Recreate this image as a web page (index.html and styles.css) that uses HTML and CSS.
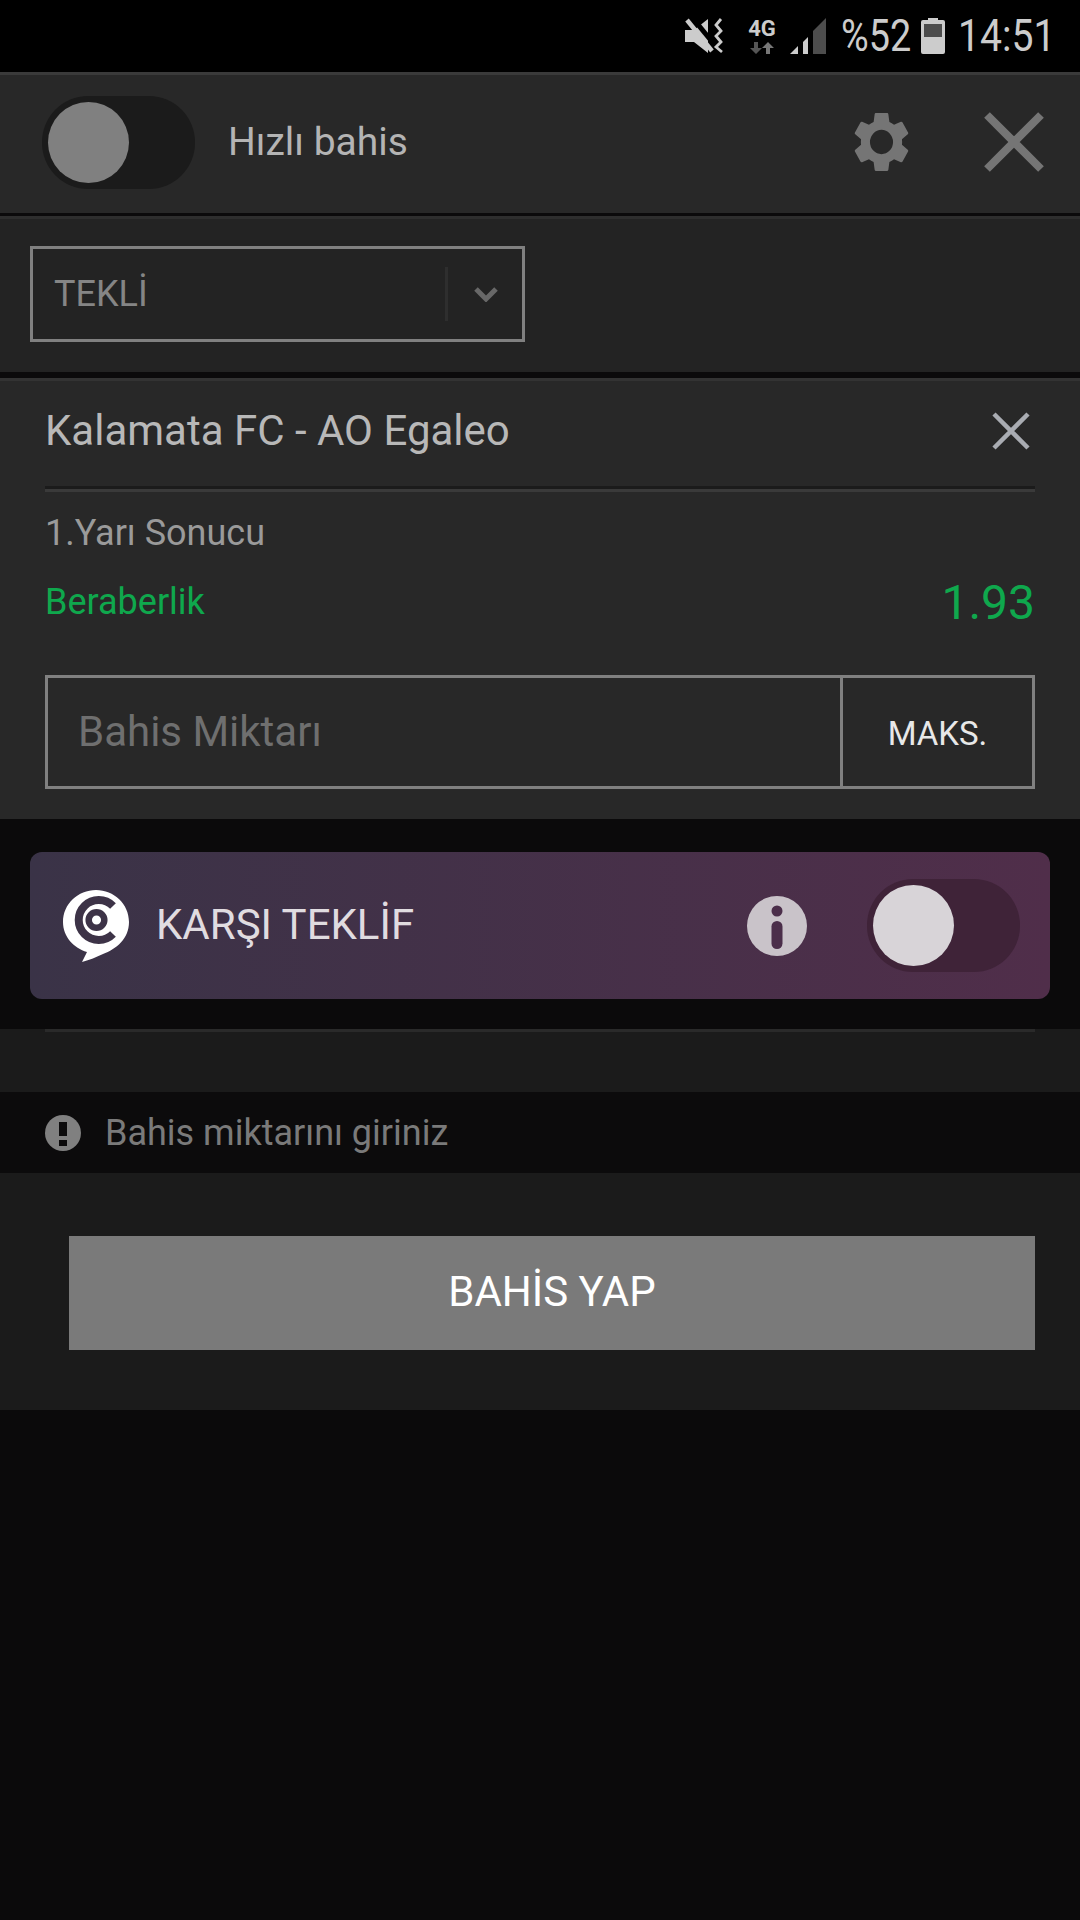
FILE: index.html
```html
<!DOCTYPE html>
<html lang="tr">
<head>
<meta charset="utf-8">
<title>Bahis kuponu</title>
<link rel="stylesheet" href="styles.css">
</head>
<body>
<div class="status">
  <svg class="st-mute" viewBox="0 0 38 36" width="38" height="36">
    <path fill="#ccc" d="M0 12h9L23 1v34L9 24H0z"/>
    <path stroke="#000" stroke-width="5" d="M6 -2L33 31"/>
    <path stroke="#ccc" stroke-width="4.500" d="M2 2L27 33"/>
    <path fill="none" stroke="#ccc" stroke-width="2.800" d="M36 1l-5 6 5 6-5 5 5 6-5 5 6 5"/>
  </svg>
  <div class="st-net">
    <span class="st-4g">4G</span>
    <svg viewBox="0 0 24 12" width="24" height="12">
      <path fill="#555" d="M4 0h4v6h4l-6 6-6-6h4z"/>
      <path fill="#777" d="M16 12h4V6h4l-6-6-6 6h4z"/>
    </svg>
  </div>
  <svg class="st-signal" viewBox="0 0 36 36" width="36" height="36">
    <path fill="#ccc" d="M0 36l8-8v8z"/>
    <path fill="#ccc" d="M13 36V24l5-5v17z"/>
    <path fill="#4d4d4d" d="M23 36V13L36 0v36z"/>
  </svg>
  <span class="st-text st-pct">%52</span>
  <svg class="st-batt" viewBox="0 0 24 36" width="24" height="36">
    <path fill="#ccc" d="M7 0h10v2h5a2 2 0 0 1 2 2v30a2 2 0 0 1-2 2H2a2 2 0 0 1-2-2V4a2 2 0 0 1 2-2h5z"/>
    <path fill="#4d4d4d" d="M3 6h18v13H3z"/>
  </svg>
  <span class="st-text st-time">14:51</span>
</div>

<header class="top">
  <div class="switch"><span class="knob"></span></div>
  <span class="top-label">Hızlı bahis</span>
  <svg class="gear" viewBox="2 2 20 20" width="55" height="58" preserveAspectRatio="none">
    <path fill="#757575" fill-rule="evenodd" d="M19.43 12.980c.04-.32.07-.64.07-.98s-.03-.66-.07-.98l2.110-1.650c.19-.15.24-.42.12-.64l-2-3.460c-.12-.22-.39-.3-.61-.22l-2.490 1c-.52-.4-1.080-.73-1.690-.98l-.38-2.650C14.460 2.180 14.250 2 14 2h-4c-.25 0-.46.18-.49.42l-.38 2.650c-.61.25-1.170.59-1.690.98l-2.490-1c-.23-.09-.49 0-.61.22l-2 3.460c-.13.22-.07.49.12.64l2.110 1.650c-.04.32-.07.65-.07.98s.03.66.07.98l-2.110 1.650c-.19.15-.24.42-.12.64l2 3.460c.12.22.39.3.61.22l2.490-1c.52.4 1.080.73 1.690.98l.38 2.650c.03.24.24.42.49.42h4c.25 0 .46-.18.49-.42l.38-2.650c.61-.25 1.170-.59 1.690-.98l2.490 1c.23.09.49 0 .61-.22l2-3.460c.12-.22.07-.49-.12-.64l-2.110-1.650zM12 16.200a4.200 4.200 0 1 1 0-8.400 4.200 4.200 0 0 1 0 8.400z"/>
  </svg>
  <svg class="top-x" viewBox="0 0 60 60" width="60" height="60">
    <path stroke="#757575" stroke-width="8" d="M3 3l54 54M57 3L3 57"/>
  </svg>
</header>

<section class="type-row">
  <div class="select">
    <span class="select-text">TEKLİ</span>
    <span class="select-sep"></span>
    <svg class="chev" viewBox="0 0 24 16" width="24" height="16">
      <path fill="none" stroke="#686868" stroke-width="5" d="M2 3l10 10L22 3"/>
    </svg>
  </div>
</section>

<section class="card">
  <div class="match">
    <span class="match-name">Kalamata FC - AO Egaleo</span>
    <svg class="match-x" viewBox="0 0 38 38" width="38" height="38">
      <path stroke="#a9acb2" stroke-width="4.500" d="M2 2l34 34M36 2L2 36"/>
    </svg>
  </div>
  <div class="market">1.Yarı Sonucu</div>
  <div class="pick">
    <span class="pick-name">Beraberlik</span>
    <span class="pick-odd">1.93</span>
  </div>
  <div class="stake">
    <span class="stake-input">Bahis Miktarı</span>
    <span class="stake-max">MAKS.</span>
  </div>
</section>

<section class="counter-wrap">
  <div class="counter">
    <svg class="counter-logo" viewBox="0 0 66 72" width="66" height="72">
      <path fill="#fff" d="M33 0c18 0 33 14 33 32 0 17-13 27-26 32-7 3-13 6-21 8l5-10C11 58 0 47 0 32 0 14 15 0 33 0z"/>
      <circle cx="33.500" cy="30" r="7.800" fill="none" stroke="#3d3347" stroke-width="6.500"/>
      <path fill="none" stroke="#3d3347" stroke-width="8" d="M50 16A20 20 0 1 0 50 44"/>
    </svg>
    <span class="counter-label">KARŞI TEKLİF</span>
    <svg class="info" viewBox="0 0 60 60" width="60" height="60">
      <circle cx="30" cy="30" r="30" fill="#c9c3c9"/>
      <circle cx="30" cy="15" r="5.500" fill="#4b2e4a"/>
      <rect x="24.500" y="25" width="11" height="28" rx="5.500" fill="#4b2e4a"/>
    </svg>
    <div class="switch switch-on"><span class="knob"></span></div>
  </div>
</section>

<div class="rule-band"><div class="rule"></div></div>

<div class="notice">
  <svg viewBox="0 0 36 36" width="36" height="36">
    <circle cx="18" cy="18" r="18" fill="#808080"/>
    <path fill="#0c0b0c" d="M14 7h8v14h-8zM14 25h8v6h-8z"/>
  </svg>
  <span class="notice-text">Bahis miktarını giriniz</span>
</div>

<section class="submit-row">
  <div class="submit">BAHİS YAP</div>
</section>
</body>
</html>
```
FILE: styles.css
```css
* { box-sizing: border-box; }
html, body { margin: 0; padding: 0; }
body {
  width: 1080px;
  height: 1920px;
  overflow: hidden;
  background: #0b0a0b;
  font-family: Roboto, "Noto Sans", sans-serif;
}
.status {
  height: 72px;
  background: #000;
  display: flex;
  align-items: center;
  padding: 0 0 0 685px;
}
.status svg { flex: none; }
.st-net { margin-left: 23px; width: 32px; display: flex; flex-direction: column; align-items: center; }
.st-4g { font-size: 22px; line-height: 20px; font-weight: 700; color: #ccc; }
.st-net svg { margin-top: 3px; }
.st-signal { margin-left: 12px; }
.st-text { color: #ccc; font-size: 45px; display: inline-block; transform: scaleX(.87); transform-origin: left center; white-space: nowrap; line-height: 72px; }
.st-pct { margin-left: 15px; width: 80px; transform: scaleX(.84); }
.st-time { margin-left: 13px; width: 90px; }

.top {
  height: 141px;
  background: #282828;
  border-top: 3px solid #3a3a3a;
  display: flex;
  align-items: center;
  padding: 0 36px 3px 42px;
  color: #b4b4b4;
}
.switch {
  width: 153px;
  height: 93px;
  border-radius: 46px;
  background: #1b1b1b;
  padding: 6px;
  flex: none;
}
.knob { display: block; width: 81px; height: 81px; border-radius: 50%; background: #808080; }
.top-label { margin: 0 0 2px 33px; font-size: 39px; flex: 1; }
.top-x { margin: 0 0 2px 75px; }
.gear { margin-bottom: 2px; }

.type-row {
  height: 156px;
  margin-top: 3px;
  background: #232323;
  border-top: 3px solid #2e2e2e;
  padding: 27px 0 0 30px;
}
.select {
  width: 495px;
  height: 96px;
  border: 3px solid #808080;
  display: flex;
  align-items: center;
  padding: 0 24px 0 21px;
}
.select-text { font-size: 36px; color: #858585; flex: 1; }
.select-sep { width: 3px; height: 54px; background: #2e2e2e; margin-right: 26px; }

.card {
  height: 441px;
  margin-top: 6px;
  background: #282828;
  border-top: 3px solid #333;
  padding: 0 45px;
}
.match {
  height: 111px;
  display: flex;
  align-items: center;
  justify-content: space-between;
  padding: 0 5px 10px 0;
  border-bottom: 3px solid #3a3a3a;
  box-shadow: inset 0 -3px 0 #1b1b1b;
}
.match-name { font-size: 42px; color: #b8b8b8; }
.match-x { margin-top: 2px; }
.market { margin-top: 19px; font-size: 36px; line-height: 44px; color: #9a9a9a; }
.pick { display: flex; justify-content: space-between; align-items: center; margin-top: 20px; height: 54px; color: #0fa84d; }
.pick-name { font-size: 36px; }
.pick-odd { font-size: 48px; }
.stake {
  margin-top: 46px;
  height: 114px;
  border: 3px solid #808080;
  display: flex;
  align-items: stretch;
}
.stake-input { flex: 1; padding-left: 30px; font-size: 42px; line-height: 108px; color: #6f6f6f; }
.stake-max { width: 192px; border-left: 3px solid #808080; text-align: center; font-size: 33px; line-height: 111px; color: #e8e8e8; }

.counter-wrap { height: 210px; padding: 33px 30px 0; }
.counter {
  height: 147px;
  border-radius: 12px;
  background: linear-gradient(90deg, #3a3347 0%, #502e4a 100%);
  display: flex;
  align-items: center;
  padding: 0 30px 0 33px;
}
.counter-label { margin: 0 0 2px 27px; font-size: 42px; color: #e0dce0; flex: 1; }
.info { margin-right: 60px; }
.switch-on { background: #3f2338; }
.switch-on .knob { background: #d8d4d8; }

.rule-band { height: 63px; background: #1b1b1b; padding: 0 45px; }
.rule { height: 3px; background: #2a2a2a; }
.notice {
  height: 81px;
  background: #0c0b0c;
  display: flex;
  align-items: center;
  padding-left: 45px;
}
.notice-text { margin-left: 24px; font-size: 36px; color: #7a7a7a; }
.submit-row { height: 237px; background: #1b1b1b; padding: 63px 45px 0 69px; }
.submit { height: 114px; background: #7a7a7a; color: #fff; font-size: 42px; line-height: 111px; text-align: center; }
```
